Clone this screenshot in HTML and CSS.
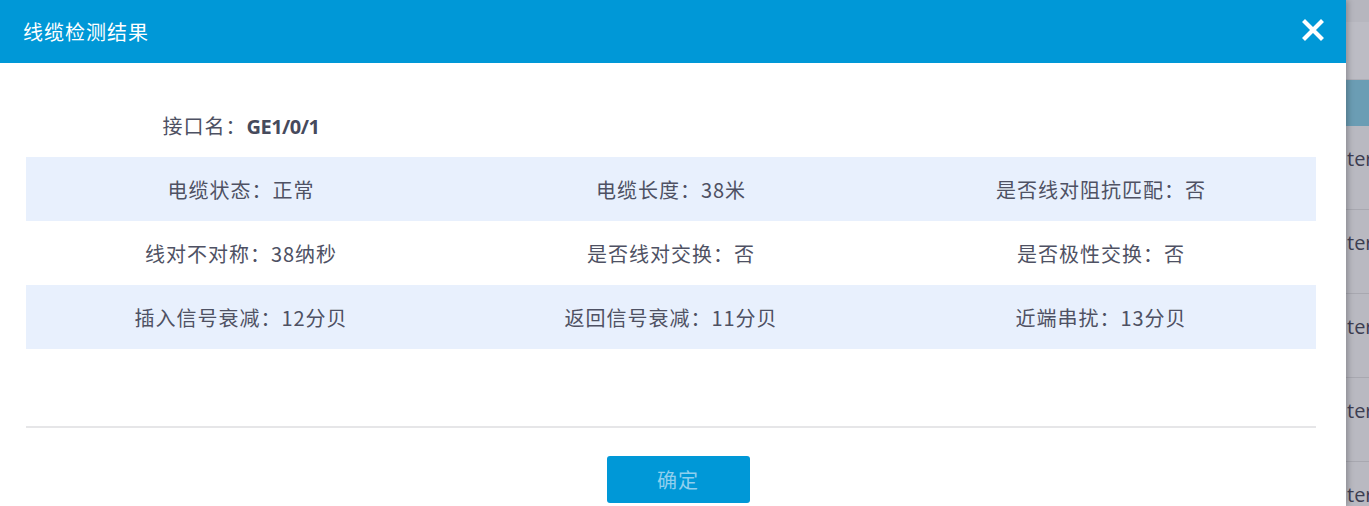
FILE: index.html
```html
<!DOCTYPE html>
<html lang="zh">
<head>
<meta charset="utf-8">
<title>线缆检测结果</title>
<link rel="stylesheet" href="styles.css">
</head>
<body>
<div class="page">
  <div class="modal">
    <div class="modal-header">
      <span class="modal-title">线缆检测结果</span>
      <svg class="close" width="22" height="22" viewBox="0 0 22 22"><path d="M3 3 L19 19 M19 3 L3 19" stroke="#fff" stroke-width="4.2" stroke-linecap="square"/></svg>
    </div>
    <div class="modal-body">
      <div class="row">
        <div class="cell">接口名：<b class="iface">GE1/0/1</b></div>
        <div class="cell"></div>
        <div class="cell"></div>
      </div>
      <div class="row striped">
        <div class="cell">电缆状态：正常</div>
        <div class="cell">电缆长度：38米</div>
        <div class="cell">是否线对阻抗匹配：否</div>
      </div>
      <div class="row">
        <div class="cell">线对不对称：38纳秒</div>
        <div class="cell">是否线对交换：否</div>
        <div class="cell">是否极性交换：否</div>
      </div>
      <div class="row striped">
        <div class="cell">插入信号衰减：12分贝</div>
        <div class="cell">返回信号衰减：11分贝</div>
        <div class="cell">近端串扰：13分贝</div>
      </div>
    </div>
    <div class="modal-footer">
      <button class="btn-ok">确定</button>
    </div>
  </div>
  <div class="backdrop">
    <div class="bd-top"></div>
    <div class="bd-bar"></div>
    <div class="bd-head"></div>
    <div class="bd-row">ter</div>
    <div class="bd-row">ter</div>
    <div class="bd-row">ter</div>
    <div class="bd-row">ter</div>
    <div class="bd-row">ter</div>
  </div>
</div>
</body>
</html>
```
FILE: styles.css
```css
* { box-sizing: border-box; }
html, body { margin: 0; padding: 0; }
body {
  width: 1369px;
  height: 506px;
  overflow: hidden;
  font-family: "Noto Sans CJK SC", "Noto Sans", sans-serif;
  background: #b9b9c1;
}
.page {
  display: flex;
  height: 506px;
}
.modal {
  width: 1346px;
  flex: none;
  background: #fff;
  display: flex;
  flex-direction: column;
  position: relative;
  z-index: 2;
  box-shadow: 2px 0 6px rgba(0,0,0,0.25);
}
.modal-header {
  height: 63px;
  background: #0098d7;
  display: flex;
  align-items: center;
  justify-content: space-between;
  padding: 0 22px 0 23px;
}
.modal-title {
  color: #fff;
  font-size: 20px;
  letter-spacing: 1px;
}
.close { display: block; margin-top: -4px; }
.modal-body {
  padding: 30px 30px 0 26px;
}
.row {
  display: grid;
  grid-template-columns: repeat(3, 1fr);
  height: 64px;
  align-items: center;
}
.row.striped { background: #e8f0fd; }
.cell {
  text-align: center;
  font-size: 20px;
  letter-spacing: 1px;
  color: #4e5163;
}
.iface {
  font-family: "Open Sans", "Noto Sans", sans-serif;
  font-weight: 700;
  letter-spacing: -0.5px;
  color: #464a5c;
}
.modal-footer {
  margin: 77px 30px 0 26px;
  border-top: 2px solid #e6e6e8;
  padding-top: 28px;
  display: flex;
  justify-content: center;
}
.btn-ok {
  width: 143px;
  height: 47px;
  margin-left: 14px;
  border: none;
  border-radius: 3px;
  background: #0098d7;
  color: #8fcfee;
  font-family: "Noto Sans CJK SC", sans-serif;
  font-size: 20px;
  letter-spacing: 1px;
}
.backdrop {
  flex: 1;
  min-width: 0;
  background: #b9b9c1;
  overflow: hidden;
  display: flex;
  flex-direction: column;
}
.bd-top { flex: none; height: 22px; background: #b6b6be; }
.bd-bar { flex: none; height: 58px; background: #bcbcc4; border-bottom: 1px solid #aeaeb6; }
.bd-head { flex: none; height: 46px; background: #6b9db4; }
.bd-row {
  flex: none;
  height: 84px;
  border-bottom: 1px solid #a8a8b0;
  padding-top: 18px;
  padding-left: 1px;
  font-family: "Open Sans", sans-serif;
  font-size: 20px;
  line-height: 30px;
  color: #3d3e52;
  white-space: nowrap;
  overflow: hidden;
}
```
